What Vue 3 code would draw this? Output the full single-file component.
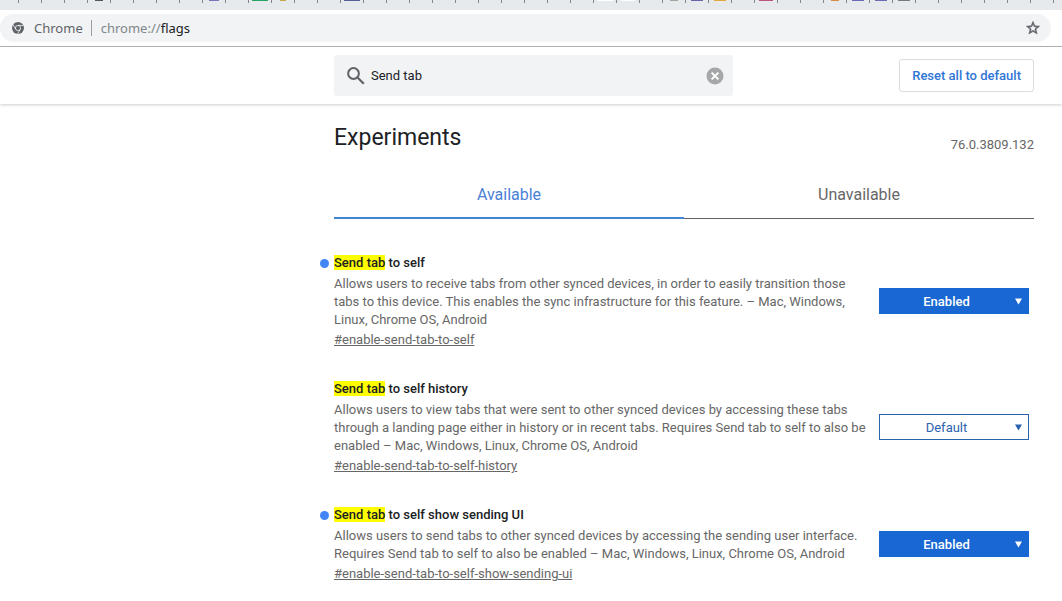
<script setup>
import { ref } from 'vue'

const favicons = {
  4: ['#54565c', 8],
  9: ['#7777b8', 10],
  11: ['#22a566', 16],
  12: ['#c9a646', 6],
  15: ['#56619c', 16],
  26: ['#ffffff', 16],
  27: ['#ffffff', 14],
  29: ['#a3a59f', 8],
  30: ['#6a66a8', 12],
  31: ['#e3a83c', 12],
  33: ['#b9537f', 14],
  36: ['#d98c48', 8],
  37: ['#6b6bb5', 12],
  38: ['#6b6bb5', 12],
  39: ['#77797e', 12]
}
const browserTabs = Array.from({ length: 120 }, (_, i) => {
  const icon = favicons[i]
  return icon ? { color: icon[0], width: icon[1] } : null
})

const query = ref('Send tab')
const flags = ref([
  {
    id: 'enable-send-tab-to-self',
    rest: ' to self',
    text: 'Allows users to receive tabs from other synced devices, in order to easily transition those tabs to this device. This enables the sync infrastructure for this feature. – Mac, Windows, Linux, Chrome OS, Android',
    value: 'Enabled'
  },
  {
    id: 'enable-send-tab-to-self-history',
    rest: ' to self history',
    text: 'Allows users to view tabs that were sent to other synced devices by accessing these tabs through a landing page either in history or in recent tabs. Requires Send tab to self to also be enabled – Mac, Windows, Linux, Chrome OS, Android',
    value: 'Default'
  },
  {
    id: 'enable-send-tab-to-self-show-sending-ui',
    rest: ' to self show sending UI',
    text: 'Allows users to send tabs to other synced devices by accessing the sending user interface. Requires Send tab to self to also be enabled – Mac, Windows, Linux, Chrome OS, Android',
    value: 'Enabled'
  }
])
</script>

<template>
  <div class="page">
    <div class="tabstrip" aria-hidden="true">
      <div v-for="(tab, i) in browserTabs" :key="i" class="strip-tab">
        <span v-if="tab" class="favicon" :style="{ background: tab.color, width: tab.width + 'px' }"></span>
      </div>
    </div>

    <div class="toolbar">
      <div class="omnibox">
        <svg class="chrome-icon" viewBox="0 0 24 24" aria-hidden="true">
          <circle cx="12" cy="12" r="12" fill="#5f6368" />
          <g stroke="#f1f3f4" stroke-width="1.6" fill="none">
            <circle cx="12" cy="12" r="5.2" />
            <path d="M12 6.8H23M7.5 14.6L2 5M16.5 14.6L11 24" />
          </g>
        </svg>
        <span class="origin">Chrome</span>
        <span class="divider"></span>
        <span class="url"><span class="scheme">chrome://</span>flags</span>
        <button class="star" aria-label="Bookmark this page">
          <svg viewBox="0 0 24 24"><path fill="#5f6368" stroke="#5f6368" stroke-width="0.8" d="M22 9.24l-7.19-.62L12 2 9.19 8.63 2 9.24l5.46 4.73L5.82 21 12 17.27 18.18 21l-1.63-7.03L22 9.24zM12 15.4l-3.76 2.27 1-4.28-3.32-2.88 4.38-.38L12 6.1l1.71 4.04 4.38.38-3.32 2.88 1 4.28L12 15.4z" /></svg>
        </button>
      </div>
    </div>

    <header class="header">
      <div class="column header-row">
        <div class="search">
          <svg class="search-icon" viewBox="0 0 18 18" aria-hidden="true">
            <circle cx="6.5" cy="6.5" r="5.4" fill="none" stroke="#5f6368" stroke-width="2" />
            <path d="M10.5 10.5L16.8 16.8" stroke="#5f6368" stroke-width="2.2" />
          </svg>
          <input v-model="query" type="text" aria-label="Search flags" />
          <button class="clear" aria-label="Clear search" @click="query = ''">
            <svg viewBox="0 0 18 18">
              <circle cx="9" cy="9" r="8.5" fill="#a6a7a9" />
              <path d="M5.6 5.6L12.4 12.4M12.4 5.6L5.6 12.4" stroke="#fff" stroke-width="2" />
            </svg>
          </button>
        </div>
        <button class="reset">Reset all to default</button>
      </div>
    </header>

    <main class="column">
      <div class="title-row">
        <h1>Experiments</h1>
        <span class="version">76.0.3809.132</span>
      </div>
      <div class="tabs" role="tablist">
        <button class="tab selected" role="tab" aria-selected="true">Available</button>
        <button class="tab" role="tab" aria-selected="false">Unavailable</button>
      </div>
      <section v-for="flag in flags" :key="flag.id" class="flag">
        <div class="info">
          <h2 :id="flag.id + '-name'" :class="{ changed: flag.value !== 'Default' }"><mark>Send tab</mark>{{ flag.rest }}</h2>
          <p>{{ flag.text }}</p>
          <a :href="'#' + flag.id">#{{ flag.id }}</a>
        </div>
        <div class="choice" :class="{ active: flag.value !== 'Default' }">
          <select v-model="flag.value" :aria-labelledby="flag.id + '-name'">
            <option>Default</option>
            <option>Enabled</option>
            <option>Disabled</option>
          </select>
          <svg class="arrow" viewBox="0 0 7 7" aria-hidden="true"><path d="M0 0.5H7L3.5 6.5Z" fill="currentColor" /></svg>
        </div>
      </section>
    </main>
  </div>
</template>

<style>
body {
  margin: 0;
  background: #fff;
  overflow: hidden;
}
</style>

<style scoped>
.page {
  font-family: Roboto, "Liberation Sans", sans-serif;
  font-size: 13px;
  color: #202124;
}
button {
  font: inherit;
  cursor: pointer;
}
.tabstrip {
  display: flex;
  height: 10px;
  overflow: hidden;
  background: #e7eaed;
}
.strip-tab {
  flex: none;
  box-sizing: border-box;
  width: 23px;
  height: 3px;
  display: flex;
  justify-content: center;
  border-right: 1px solid #85888c;
}
.strip-tab:first-child {
  width: 19px;
}
.favicon {
  height: 1px;
}
.toolbar {
  padding: 4px 11px 4px 0;
  border-bottom: 1px solid #b3b4b6;
}
.omnibox {
  display: flex;
  align-items: center;
  height: 28px;
  padding: 0 10px 0 12px;
  border-radius: 14px;
  background: #f1f3f4;
  font-family: "Noto Sans", "Open Sans", sans-serif;
  font-size: 13px;
}
.chrome-icon {
  width: 12px;
  height: 12px;
}
.origin {
  margin-left: 10px;
  color: #5f6368;
}
.divider {
  width: 1px;
  height: 16px;
  margin: 0 9px 0 8px;
  background: #9a9da1;
}
.scheme {
  color: #80868b;
}
.star {
  display: flex;
  margin-left: auto;
  padding: 0;
  border: 0;
  background: none;
}
.star svg {
  width: 16px;
  height: 16px;
}
.column {
  width: 700px;
  margin: 0 28px 0 auto;
}
.header {
  padding: 8px 0;
  background: #fff;
  box-shadow: 0 1px 3px rgba(0, 0, 0, 0.2);
}
.header-row {
  display: flex;
  align-items: center;
  justify-content: space-between;
}
.search {
  display: flex;
  align-items: center;
  box-sizing: border-box;
  width: 399px;
  height: 41px;
  padding: 0 9px 0 13px;
  border-radius: 3px;
  background: #f1f3f4;
}
.search-icon {
  width: 18px;
  height: 18px;
}
.search input {
  flex: 1;
  min-width: 0;
  padding: 0 0 0 6px;
  border: 0;
  outline: 0;
  background: none;
  color: #202124;
  font: inherit;
}
.clear {
  display: flex;
  padding: 0;
  border: 0;
  background: none;
}
.clear svg {
  width: 18px;
  height: 18px;
}
.reset {
  height: 33px;
  padding: 0 12px;
  border: 1px solid #dadce0;
  border-radius: 3px;
  background: #fff;
  color: #2f76d6;
  font-weight: 500;
}
.title-row {
  display: flex;
  justify-content: space-between;
  padding-top: 18px;
}
h1 {
  margin: 0;
  font-size: 23px;
  font-weight: 400;
  line-height: 32px;
}
.version {
  padding-top: 14px;
  color: #676767;
  line-height: 18px;
}
.tabs {
  display: flex;
  margin-top: 15px;
}
.tab {
  flex: 1;
  height: 50px;
  padding: 2px 0 0;
  border: 0;
  border-bottom: 1px solid #5f6368;
  background: none;
  color: #676767;
  font-size: 16px;
}
.tab.selected {
  border-bottom: 2px solid #4285d0;
  color: #4a7fd6;
}
.flag {
  display: flex;
  align-items: center;
  gap: 10px;
  margin-top: 30px;
  padding-right: 5px;
}
.tabs + .flag {
  margin-top: 34px;
}
.info {
  flex: 1;
  color: #676767;
  line-height: 18px;
}
h2 {
  position: relative;
  margin: 0 0 2px;
  color: #202124;
  font-size: 13px;
  font-weight: 500;
  line-height: 20px;
}
.changed::before {
  content: "";
  position: absolute;
  top: 6px;
  left: -14px;
  width: 9px;
  height: 9px;
  border-radius: 50%;
  background: #4285f4;
}
mark {
  background: #ff0;
  color: inherit;
}
p {
  margin: 0 0 2px;
}
a {
  display: block;
  color: inherit;
}
.choice {
  position: relative;
  width: 150px;
  color: #2b62ae;
}
.choice select {
  display: block;
  appearance: none;
  width: 100%;
  height: 26px;
  padding: 0 15px 0 0;
  border: 1px solid #2b62ae;
  border-radius: 0;
  background: #fff;
  color: inherit;
  font: inherit;
  text-align: center;
  text-align-last: center;
}
.choice.active {
  color: #fff;
}
.choice.active select {
  border-color: #1967d2;
  background: #1967d2;
  font-weight: 500;
}
.arrow {
  position: absolute;
  top: 10px;
  right: 7px;
  width: 7px;
  height: 7px;
  pointer-events: none;
}
</style>
